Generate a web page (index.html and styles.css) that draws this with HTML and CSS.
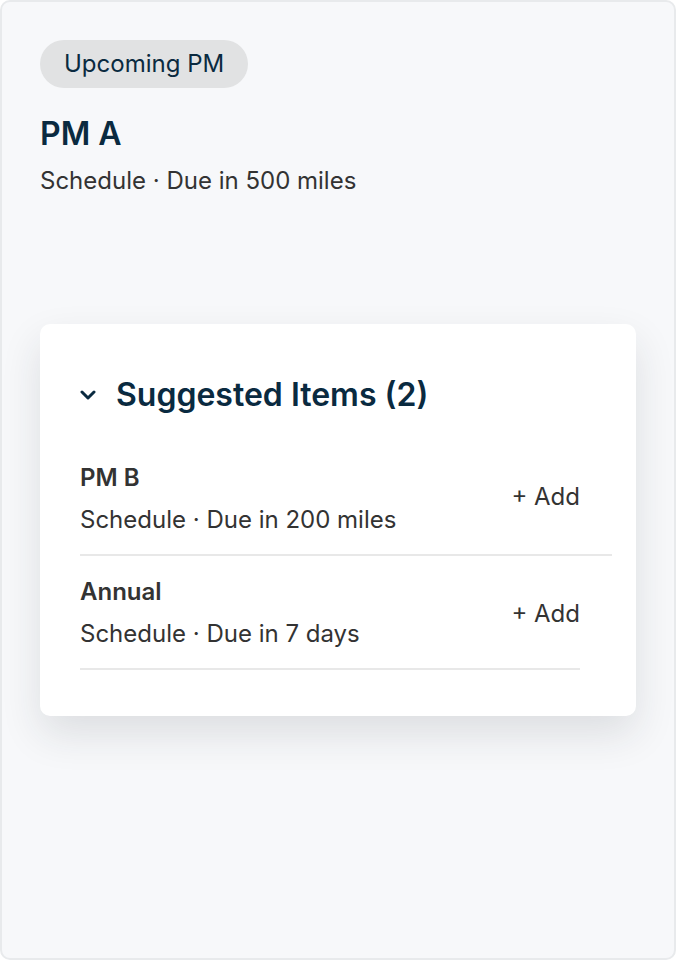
FILE: index.html
```html
<!DOCTYPE html>
<html lang="en">
<head>
    <meta charset="UTF-8">
    <meta name="viewport" content="width=device-width, initial-scale=1.0">
    <title>Upcoming PM</title>
    <link rel="stylesheet" href="styles.css">
</head>
<body>

<div class="panel">
    <span class="badge">Upcoming PM</span>
    <h1 class="pm-title">PM A</h1>
    <p class="pm-meta">Schedule · Due in 500 miles</p>

    <div class="suggest-card">
        <div class="suggest-head">
            <svg class="chevron" width="16" height="10" viewBox="0 0 16 10">
                <path d="M2 2 L8 8 L14 2" fill="none" stroke="#0a2a40" stroke-width="3" stroke-linecap="round" stroke-linejoin="round"/>
            </svg>
            <h2>Suggested Items (2)</h2>
        </div>

        <div class="suggest-row first">
            <div class="suggest-info">
                <div class="suggest-name">PM B</div>
                <div class="suggest-meta">Schedule · Due in 200 miles</div>
            </div>
            <button class="add-btn">+ Add</button>
        </div>

        <div class="suggest-row last">
            <div class="suggest-info">
                <div class="suggest-name">Annual</div>
                <div class="suggest-meta">Schedule · Due in 7 days</div>
            </div>
            <button class="add-btn">+ Add</button>
        </div>
    </div>
</div>

</body>
</html>
```

FILE: styles.css
```css
html, body {
    margin: 0;
    height: 100%;
}
body {
    font-family: Inter, "Noto Sans", sans-serif;
    background-color: #ffffff;
    color: #333333;
}
.panel {
    box-sizing: border-box;
    height: 100%;
    background-color: #f7f8fa;
    border: 2px solid #e8eaec;
    border-radius: 10px;
    padding: 38px;
}
.badge {
    display: inline-block;
    height: 48px;
    line-height: 48px;
    padding: 0 24px;
    border-radius: 24px;
    background-color: #e1e2e3;
    color: #0a2a40;
    font-size: 24px;
    font-weight: 400;
}
.pm-title {
    margin: 26px 0 0;
    font-size: 32px;
    line-height: 40px;
    font-weight: 600;
    color: #0a2a40;
}
.pm-meta {
    margin: 12px 0 0;
    font-size: 24px;
    line-height: 30px;
    color: #333333;
}
.suggest-card {
    margin-top: 128px;
    background: #ffffff;
    border-radius: 10px;
    padding: 51px 24px 46px 40px;
    box-shadow: 0 18px 40px rgba(30, 40, 50, 0.12);
}
.suggest-head {
    display: flex;
    align-items: center;
    gap: 20px;
    margin-bottom: 27px;
}
.suggest-head h2 {
    margin: 0;
    font-size: 32px;
    line-height: 40px;
    font-weight: 600;
    color: #0a2a40;
}
.suggest-row {
    display: flex;
    align-items: center;
    justify-content: space-between;
    padding: 20px 0 18px;
    border-bottom: 2px solid #e8e8e8;
}
.suggest-row.last {
    margin-right: 32px;
}
.suggest-row.first .add-btn {
    margin-right: 32px;
    margin-bottom: 6px;
}
.suggest-name {
    font-size: 24px;
    line-height: 32px;
    font-weight: 600;
    color: #333333;
}
.suggest-meta {
    margin-top: 10px;
    font-size: 24px;
    line-height: 32px;
    color: #333333;
}
.add-btn {
    border: none;
    background: none;
    padding: 0;
    font-family: inherit;
    font-size: 24px;
    color: #333333;
    cursor: pointer;
}
```
